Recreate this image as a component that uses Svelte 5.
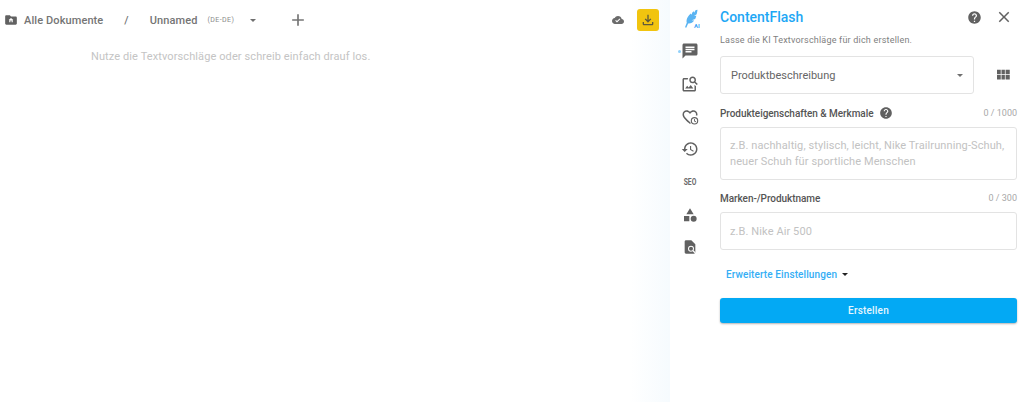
<script lang="ts">
    const railIcons = [
        { id: 'chat', path: 'M20 2H4c-1.1 0-2 .9-2 2v18l4-4h14c1.1 0 2-.9 2-2V4c0-1.100-.9-2-2-2zM6 9h12v2H6V9zm8 5H6v-2h8v2zm4-6H6V6h12v2z' },
        { id: 'image-search', path: 'M18 13v7H4V6h5.020c.05-.71.22-1.38.48-2H4c-1.100 0-2 .9-2 2v14c0 1.100.9 2 2 2h14c1.100 0 2-.9 2-2v-5l-2-2zm-1.500 5h-11l2.750-3.530 1.960 2.360 2.750-3.540L16.500 18zm2.800-9.110c.44-.7.700-1.510.700-2.390C20 4.010 17.990 2 15.500 2S11 4.010 11 6.500s2.010 4.500 4.490 4.500c.88 0 1.700-.26 2.390-.7L21 13.420 22.420 12 19.300 8.890zM15.500 9C14.120 9 13 7.880 13 6.500S14.120 4 15.500 4 18 5.120 18 6.500 16.880 9 15.500 9z' },
        { id: 'favorite', path: 'M12.100 18.550l-.1.100-.11-.1C7.140 14.240 4 11.390 4 8.500 4 6.500 5.500 5 7.500 5c1.540 0 3.040 1 3.570 2.360h1.860C13.460 6 14.960 5 16.500 5c2 0 3.500 1.500 3.500 3.500 0 .5-.1 1-.26 1.500h2.090c.11-.5.170-1 .170-1.500C22 5.420 19.580 3 16.500 3c-1.740 0-3.410.81-4.500 2.090C10.910 3.810 9.240 3 7.500 3 4.420 3 2 5.420 2 8.500c0 3.780 3.400 6.860 8.550 11.540L12 21.350l1.060-.97c-.3-.55-.52-1.150-.96-1.830z M18 12a5 5 0 1 0 0 10 5 5 0 0 0 0-10zm0 8.500a3.500 3.500 0 1 1 0-7 3.500 3.500 0 0 1 0 7zm.5-6h-1.200v3.200l2.400 1.400.6-1-1.800-1z' },
        { id: 'history', path: 'M13 3c-4.970 0-9 4.030-9 9H1l3.890 3.890.07.140L9 12H6c0-3.870 3.130-7 7-7s7 3.130 7 7-3.130 7-7 7c-1.930 0-3.680-.79-4.940-2.060l-1.420 1.420C8.270 19.990 10.510 21 13 21c4.970 0 9-4.030 9-9s-4.030-9-9-9zm-1 5v5l4.280 2.540.72-1.210-3.500-2.080V8H12z' }
    ];
    const lowerIcons = [
        { id: 'shapes', path: 'M12 2l5.500 9h-11L12 2zM3 13.500h8v8H3v-8zM17.500 13a4.500 4.500 0 1 1 0 9 4.500 4.500 0 0 1 0-9z' },
        { id: 'doc-search', path: 'M14 2H6c-1.100 0-2 .9-2 2v16c0 1.100.9 2 2 2h12c1.100 0 2-.9 2-2V8l-6-6zm5.100 19.500l-3.200-3.200c-.7.45-1.500.7-2.400.7a4.500 4.500 0 1 1 4.500-4.500c0 .9-.26 1.700-.7 2.400l3.200 3.200-1.400 1.400zM13.500 11.500a3 3 0 1 0 0 6 3 3 0 0 0 0-6z' }
    ];
</script>

{#snippet help(size: number)}
    <svg width={size} height={size} viewBox="0 0 24 24" fill="#616161"><path d="M12 2C6.480 2 2 6.480 2 12s4.480 10 10 10 10-4.480 10-10S17.520 2 12 2zm1 17h-2v-2h2v2zm2.070-7.750l-.9.920C13.450 12.900 13 13.500 13 15h-2v-.5c0-1.100.45-2.100 1.170-2.830l1.240-1.260c.37-.36.590-.86.590-1.410 0-1.100-.9-2-2-2s-2 .9-2 2H8c0-2.210 1.790-4 4-4s4 1.790 4 4c0 .88-.36 1.680-.93 2.250z"/></svg>
{/snippet}

<div class="page">
    <main class="editor">
        <header class="toolbar">
            <svg class="folder" width="14" height="14" viewBox="0 0 24 24" fill="#616161"><path d="M20 6h-8l-2-2H4c-1.100 0-2 .9-2 2v12c0 1.100.9 2 2 2h16c1.100 0 2-.9 2-2V8c0-1.100-.9-2-2-2zm-5 10h-2v-3h-2v3H9v-4l-1 0 4-3.500 4 3.500h-1v4z"/></svg>
            <span class="crumb all">Alle Dokumente</span>
            <span class="crumb slash">/</span>
            <span class="crumb name">Unnamed</span>
            <span class="locale">(DE-DE)</span>
            <span class="tri small"></span>
            <svg class="plus" width="20" height="20" viewBox="0 0 24 24" fill="#757575"><path d="M19 13h-6v6h-2v-6H5v-2h6V5h2v6h6v2z"/></svg>
            <svg class="cloud" width="12" height="12" viewBox="0 0 24 24" fill="#6b6b6b"><path d="M19.350 10.040C18.670 6.590 15.640 4 12 4 9.110 4 6.600 5.640 5.350 8.040 2.340 8.360 0 10.910 0 14c0 3.310 2.690 6 6 6h13c2.760 0 5-2.240 5-5 0-2.640-2.050-4.780-4.650-4.960zM10 17l-3.500-3.500 1.410-1.410L10 14.170l5.180-5.180 1.410 1.410L10 17z"/></svg>
            <button class="save" aria-label="Speichern">
                <svg width="16" height="16" viewBox="0 0 24 24" fill="#5f5a3c"><path d="M18 15v3H6v-3H4v3c0 1.100.9 2 2 2h12c1.100 0 2-.9 2-2v-3h-2zm-1-4l-1.410-1.410L13 12.170V4h-2v8.170L8.410 9.590 7 11l5 5 5-5z"/></svg>
            </button>
        </header>
        <p class="hint">Nutze die Textvorschläge oder schreib einfach drauf los.</p>
    </main>

    <nav class="rail">
        <div class="rail-item logo">
            <svg width="20" height="22" viewBox="0 0 24 24" fill="#5ab4f2"><path d="M21 1c-1 .2-2 .6-3 1.100l-.3 2.400-1-1.700c-.8.5-1.500 1-2.200 1.600l-.2 2.600-1.200-1.500C10 8 8.500 10.500 8 13c-.3 1.300-.2 2.500.1 3.600L6 22l1.500.6 2.300-5.300c3 .3 5.500-1 7.200-3.500l-3-.3 4.200-1.500c.6-1.200 1-2.400 1.400-3.800l-2.600.1 3-2C20.500 4.800 20.800 3 21 1z"/></svg>
            <span class="ai">AI</span>
        </div>
        {#each railIcons as icon, i}
            <div class="rail-item">
                {#if i === 0}<span class="dot"></span>{/if}
                <svg width="18" height="18" viewBox="0 0 24 24" fill="#616161"><path d={icon.path}/></svg>
            </div>
        {/each}
        <div class="rail-item seo">SEO</div>
        {#each lowerIcons as icon}
            <div class="rail-item">
                <svg width="16" height="16" viewBox="0 0 24 24" fill="#616161" fill-rule="evenodd"><path d={icon.path}/></svg>
            </div>
        {/each}
    </nav>

    <aside class="panel">
        <div class="panel-head">
            <h1>ContentFlash</h1>
            {@render help(15)}
            <svg class="close" width="18" height="18" viewBox="0 0 24 24" fill="#616161"><path d="M19 6.410L17.590 5 12 10.590 6.410 5 5 6.410 10.590 12 5 17.590 6.410 19 12 13.410 17.590 19 19 17.590 13.410 12z"/></svg>
        </div>
        <p class="sub">Lasse die KI Textvorschläge für dich erstellen.</p>

        <div class="select-row">
            <div class="select">
                <span>Produktbeschreibung</span>
                <span class="tri"></span>
            </div>
            <svg width="18" height="18" viewBox="0 0 24 24" fill="#616161"><path d="M4 5h5v6H4zM10 5h4.500v6H10zM15.500 5H21v6h-5.500zM4 12h5v6H4zM10 12h4.500v6H10zM15.500 12H21v6h-5.500z"/></svg>
        </div>

        <div class="label-row first">
            <span class="label">Produkteigenschaften &amp; Merkmale</span>
            {@render help(14)}
            <span class="count">0 / 1000</span>
        </div>
        <div class="field area">z.B. nachhaltig, stylisch, leicht, Nike Trailrunning-Schuh, neuer Schuh für sportliche Menschen</div>

        <div class="label-row">
            <span class="label">Marken-/Produktname</span>
            <span class="count">0 / 300</span>
        </div>
        <div class="field single">z.B. Nike Air 500</div>

        <div class="advanced">
            <span>Erweiterte Einstellungen</span>
            <span class="tri black"></span>
        </div>
        <button class="create">Erstellen</button>
    </aside>
</div>

<style>
    :global(body) {
        background: #fff;
    }
    .page {
        display: flex;
        width: 1024px;
        height: 402px;
        overflow: hidden;
        font-family: Roboto, "Liberation Sans", sans-serif;
        color: #616161;
    }
    .editor {
        flex: 1;
        min-width: 0;
        background: linear-gradient(90deg, #fff 0, #fff 630px, #f6fbfe 670px);
    }
    .toolbar {
        display: flex;
        align-items: center;
        height: 40px;
        padding-left: 4px;
        padding-right: 11px;
    }
    .crumb {
        font-size: 11px;
        font-weight: 500;
        color: #757575;
        letter-spacing: 0.1px;
    }
    .all { margin-left: 6px; }
    .slash { margin-left: 21px; }
    .name { margin-left: 21px; }
    .locale {
        margin-left: 10px;
        font-size: 7px;
        letter-spacing: 0.4px;
        color: #8a8a8a;
    }
    .tri {
        width: 0;
        height: 0;
        border-left: 3px solid transparent;
        border-right: 3px solid transparent;
        border-top: 3px solid #6f6f6f;
    }
    .tri.small {
        margin-left: 16px;
    }
    .tri.black {
        border-top-color: #222;
        margin-left: 5px;
    }
    .plus { margin-left: 32px; }
    .cloud { margin-left: auto; margin-right: 13px; }
    .save {
        width: 22px;
        height: 22px;
        padding: 0;
        display: flex;
        align-items: center;
        justify-content: center;
        border: 0;
        border-radius: 3px;
        background: #f1c40f;
    }
    .hint {
        margin: 10px 0 0 91px;
        font-size: 11px;
        color: #c4c4c4;
        letter-spacing: 0.1px;
    }
    .rail {
        width: 40px;
        flex: none;
        display: flex;
        flex-direction: column;
        align-items: center;
        padding-top: 3px;
        background: #fff;
    }
    .rail-item {
        position: relative;
        height: 32.700px;
        width: 100%;
        display: flex;
        align-items: center;
        justify-content: center;
    }
    .logo { height: 32px; }
    .ai {
        position: absolute;
        left: 24px;
        top: 19px;
        font-size: 6px;
        font-weight: 700;
        color: #42a5f5;
    }
    .dot {
        position: absolute;
        left: 8px;
        top: 15px;
        width: 3px;
        height: 3px;
        border-radius: 50%;
        background: #90d0fa;
    }
    .seo {
        font-size: 9px;
        font-weight: 700;
        color: #6b6b6b;
        transform: scaleX(0.75);
    }
    .panel {
        width: 314px;
        flex: none;
        padding: 0 7px 0 10px;
        box-sizing: border-box;
    }
    .panel-head {
        display: flex;
        align-items: center;
        height: 34px;
    }
    h1 {
        margin: 0 auto 0 0;
        font-size: 14px;
        font-weight: 500;
        color: #1ea7f5;
    }
    .close { margin-left: 13px; margin-right: 4px; }
    .sub {
        margin: 0;
        font-size: 9px;
        line-height: 12px;
        letter-spacing: 0.2px;
        color: #808080;
    }
    .select-row {
        display: flex;
        align-items: center;
        justify-content: space-between;
        margin-top: 10px;
        padding-right: 5px;
    }
    .select {
        width: 254px;
        height: 38px;
        box-sizing: border-box;
        display: flex;
        align-items: center;
        justify-content: space-between;
        padding: 0 10px 0 10px;
        border: 1px solid #e3e3e3;
        border-radius: 3px;
        font-size: 11px;
        color: #666;
    }
    .label-row {
        display: flex;
        align-items: center;
        gap: 5px;
        height: 16px;
        margin-top: 10px;
        margin-bottom: 6px;
    }
    .label-row.first {
        margin-top: 11px;
    }
    .label {
        font-size: 10px;
        font-weight: 500;
        color: #555;
        letter-spacing: -0.05px;
    }
    .count {
        margin-left: auto;
        font-size: 9px;
        color: #a8a8a8;
    }
    .field {
        box-sizing: border-box;
        border: 1px solid #e3e3e3;
        border-radius: 3px;
        padding: 0 9px;
        font-size: 11px;
        line-height: 16px;
        color: #c2c2c2;
        letter-spacing: 0.1px;
    }
    .area { height: 53px; padding-top: 10px; }
    .single { height: 38px; padding-top: 11px; }
    .advanced {
        display: flex;
        align-items: center;
        margin: 19px 0 0 6px;
        font-size: 10px;
        font-weight: 500;
        letter-spacing: 0.1px;
        color: #35aef5;
    }
    .create {
        display: block;
        width: 100%;
        height: 25px;
        margin-top: 18px;
        border: 0;
        border-radius: 3px;
        background: #03a9f4;
        color: #e6f6fe;
        font-family: inherit;
        font-size: 10px;
        font-weight: 500;
        letter-spacing: 0.2px;
        box-shadow: 0 1px 2px rgba(0, 0, 0, 0.3);
    }
</style>
